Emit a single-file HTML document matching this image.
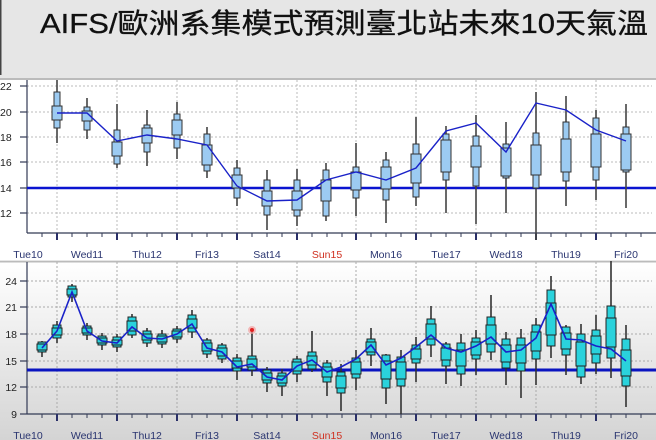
<!DOCTYPE html>
<html><head><meta charset="utf-8"><style>
html,body{margin:0;padding:0;background:#e6e6e6;}
svg{display:block;font-family:"Liberation Sans",sans-serif;}
</style></head><body>
<svg width="656" height="440" viewBox="0 0 656 440" xmlns="http://www.w3.org/2000/svg">
<defs>
<linearGradient id="g" x1="0" y1="0" x2="0" y2="1"><stop offset="0" stop-color="#ffffff"/><stop offset="1" stop-color="#d4d4d4"/></linearGradient>
</defs>
<rect x="0" y="0" width="656" height="440" fill="#e6e6e6"/>
<rect x="0" y="0" width="1.5" height="75" fill="#444"/>
<text x="40" y="33" font-family="'Liberation Sans','Noto Sans CJK TC',sans-serif" font-size="28" fill="#111" stroke="#111" stroke-width="0.3" textLength="608" lengthAdjust="spacingAndGlyphs">AIFS/歐洲系集模式預測臺北站未來10天氣溫</text>
<rect x="0" y="79" width="656" height="181" fill="#fff"/>
<rect x="0" y="78" width="656" height="2" fill="#bbb"/>
<g stroke="#bbb" stroke-dasharray="2,2" stroke-width="1">
<line x1="27" y1="86" x2="652" y2="86"/><line x1="27" y1="112" x2="652" y2="112"/><line x1="27" y1="137" x2="652" y2="137"/><line x1="27" y1="162" x2="652" y2="162"/><line x1="27" y1="213" x2="652" y2="213"/>
<line x1="57" y1="80" x2="57" y2="233"/><line x1="117" y1="80" x2="117" y2="233"/><line x1="177" y1="80" x2="177" y2="233"/><line x1="237" y1="80" x2="237" y2="233"/><line x1="297" y1="80" x2="297" y2="233"/><line x1="356" y1="80" x2="356" y2="233"/><line x1="416" y1="80" x2="416" y2="233"/><line x1="476" y1="80" x2="476" y2="233"/><line x1="536" y1="80" x2="536" y2="233"/><line x1="596" y1="80" x2="596" y2="233"/>
</g>
<g stroke="#333a55" stroke-width="1.2">
<line x1="27" y1="80" x2="27" y2="233"/><line x1="27" y1="233" x2="656" y2="233"/>
<line x1="20" y1="86" x2="27" y2="86"/><line x1="20" y1="112" x2="27" y2="112"/><line x1="20" y1="137" x2="27" y2="137"/><line x1="20" y1="162" x2="27" y2="162"/><line x1="20" y1="188" x2="27" y2="188"/><line x1="20" y1="213" x2="27" y2="213"/>
</g>
<g stroke="#333a55" stroke-width="1">
<path d="M42 233v4M72 233v4M87 233v4M102 233v4M132 233v4M147 233v4M162 233v4M192 233v4M207 233v4M222 233v4M252 233v4M267 233v4M282 233v4M312 233v4M327 233v4M342 233v4M371 233v4M386 233v4M401 233v4M431 233v4M446 233v4M461 233v4M491 233v4M506 233v4M521 233v4M551 233v4M566 233v4M581 233v4M611 233v4M626 233v4M641 233v4"/>
</g>
<g stroke="#2a3068" stroke-width="2"><path d="M57 233v7M117 233v7M177 233v7M237 233v7M297 233v7M356 233v7M416 233v7M476 233v7M536 233v7M596 233v7"/></g>
<g font-size="10.5" fill="#222">
<text x="0" y="90">22</text><text x="0" y="116">20</text><text x="0" y="141">18</text><text x="0" y="166">16</text><text x="0" y="192">14</text><text x="0" y="217">12</text>
</g>
<g font-size="10.5" fill="#2a3570" text-anchor="middle">
<text x="28" y="258">Tue10</text><text x="87" y="258">Wed11</text><text x="147" y="258">Thu12</text><text x="207" y="258">Fri13</text><text x="267" y="258">Sat14</text><text x="327" y="258" fill="#d03020">Sun15</text><text x="386" y="258">Mon16</text><text x="446" y="258">Tue17</text><text x="506" y="258">Wed18</text><text x="566" y="258">Thu19</text><text x="626" y="258">Fri20</text>
</g>
<line x1="27" y1="188" x2="656" y2="188" stroke="#0a14d0" stroke-width="2.5"/>
<g stroke="#333" fill="#9ccbf2" stroke-width="1">
<path d="M57 80V143M87 98V139M117 104V168M147 110V166M177 102V159M207 127V178M237 160V206M267 170V230M297 169V226M326 163V221M356 143V216M386 152V223M416 117V206M446 126V213M476 115V224M506 122V213M536 92V240M566 96V206M596 110V200M626 104V208" stroke="#444" stroke-width="1.6"/>
<rect x="54" y="92" width="6" height="36"/><rect x="52" y="106" width="10" height="14"/>
<rect x="84" y="107" width="6" height="23"/><rect x="82" y="111" width="10" height="10"/>
<rect x="114" y="130" width="6" height="34"/><rect x="112" y="142" width="10" height="14"/>
<rect x="144" y="125" width="6" height="27"/><rect x="142" y="128" width="10" height="15"/>
<rect x="174" y="114" width="6" height="34"/><rect x="172" y="120" width="10" height="15"/>
<rect x="204" y="134" width="6" height="37"/><rect x="202" y="145" width="10" height="20"/>
<rect x="234" y="168" width="6" height="30"/><rect x="232" y="175" width="10" height="13"/>
<rect x="264" y="180" width="6" height="35"/><rect x="262" y="191" width="10" height="15"/>
<rect x="294" y="180" width="6" height="36"/><rect x="292" y="191" width="10" height="19"/>
<rect x="323" y="170" width="6" height="46"/><rect x="321" y="180" width="10" height="21"/>
<rect x="353" y="167" width="6" height="31"/><rect x="351" y="172" width="10" height="18"/>
<rect x="383" y="160" width="6" height="40"/><rect x="381" y="167" width="10" height="22"/>
<rect x="413" y="144" width="6" height="53"/><rect x="411" y="154" width="10" height="29"/>
<rect x="443" y="134" width="6" height="46"/><rect x="441" y="140" width="10" height="32"/>
<rect x="473" y="136" width="6" height="50"/><rect x="471" y="146" width="10" height="21"/>
<rect x="503" y="144" width="6" height="34"/><rect x="501" y="148" width="10" height="28"/>
<rect x="533" y="133" width="6" height="55"/><rect x="531" y="145" width="10" height="30"/>
<rect x="563" y="122" width="6" height="59"/><rect x="561" y="139" width="10" height="33"/>
<rect x="593" y="118" width="6" height="62"/><rect x="591" y="134" width="10" height="33"/>
<rect x="623" y="127" width="6" height="45"/><rect x="621" y="134" width="10" height="36"/>
</g>
<polyline fill="none" stroke="#1a22c8" stroke-width="1.4" points="57,113 87,113 117,141 147,135 177,139 207,145 237,186 267,201 297,200 326,180 356,172 386,180 416,168 446,131 476,123 506,152 536,103 566,110 596,130 626,141"/>
<rect x="0" y="262" width="656" height="178" fill="url(#g)"/>
<rect x="0" y="261" width="656" height="1.5" fill="#bbb"/>
<g stroke="#aaa" stroke-dasharray="2,2" stroke-width="1">
<line x1="27" y1="281" x2="652" y2="281"/><line x1="27" y1="307" x2="652" y2="307"/><line x1="27" y1="334" x2="652" y2="334"/><line x1="27" y1="361" x2="652" y2="361"/><line x1="27" y1="387" x2="652" y2="387"/>
<line x1="57" y1="262" x2="57" y2="414"/><line x1="117" y1="262" x2="117" y2="414"/><line x1="177" y1="262" x2="177" y2="414"/><line x1="237" y1="262" x2="237" y2="414"/><line x1="297" y1="262" x2="297" y2="414"/><line x1="356" y1="262" x2="356" y2="414"/><line x1="416" y1="262" x2="416" y2="414"/><line x1="476" y1="262" x2="476" y2="414"/><line x1="536" y1="262" x2="536" y2="414"/><line x1="596" y1="262" x2="596" y2="414"/>
</g>
<g stroke="#333a55" stroke-width="1.2">
<line x1="27" y1="262" x2="27" y2="414"/><line x1="27" y1="414" x2="656" y2="414"/>
<line x1="20" y1="281" x2="27" y2="281"/><line x1="20" y1="307" x2="27" y2="307"/><line x1="20" y1="334" x2="27" y2="334"/><line x1="20" y1="361" x2="27" y2="361"/><line x1="20" y1="387" x2="27" y2="387"/><line x1="20" y1="414" x2="27" y2="414"/>
</g>
<g stroke="#333a55" stroke-width="1">
<path d="M42 414v4M72 414v4M87 414v4M102 414v4M132 414v4M147 414v4M162 414v4M192 414v4M207 414v4M222 414v4M252 414v4M267 414v4M282 414v4M312 414v4M327 414v4M342 414v4M371 414v4M386 414v4M401 414v4M431 414v4M446 414v4M461 414v4M491 414v4M506 414v4M521 414v4M551 414v4M566 414v4M581 414v4M611 414v4M626 414v4M641 414v4"/>
</g>
<g stroke="#2a3068" stroke-width="2"><path d="M57 414v7M117 414v7M177 414v7M237 414v7M297 414v7M356 414v7M416 414v7M476 414v7M536 414v7M596 414v7"/></g>
<g font-size="10.5" fill="#222" text-anchor="end">
<text x="17" y="285">24</text><text x="17" y="311">21</text><text x="17" y="338">18</text><text x="17" y="365">15</text><text x="17" y="391">12</text><text x="17" y="418">9</text>
</g>
<g font-size="10.5" fill="#2a3570" text-anchor="middle">
<text x="28" y="439">Tue10</text><text x="87" y="439">Wed11</text><text x="147" y="439">Thu12</text><text x="207" y="439">Fri13</text><text x="267" y="439">Sat14</text><text x="327" y="439" fill="#d03020">Sun15</text><text x="386" y="439">Mon16</text><text x="446" y="439">Tue17</text><text x="506" y="439">Wed18</text><text x="566" y="439">Thu19</text><text x="626" y="439">Fri20</text>
</g>
<line x1="27" y1="370" x2="656" y2="370" stroke="#0a14c0" stroke-width="3"/>
<path stroke="#333" stroke-width="1.6" fill="none" d="M42 341V357M57 321V343M72 284V302M87 323V340M102 333V350M117 334V352M132 314V338M147 328V347M162 330V348M177 326V343M192 310V338M207 338V358M222 343V363M237 354V380M252 332V376M267 367V392M282 369V396M297 356V382M312 331V372M327 360V396M341 364V411M356 350V390M371 328V366M386 354V404M401 350V414M416 337V382M431 306V357M446 342V384M461 334V386M476 330V375M491 295V360M506 332V385M521 329V398M536 318V385M551 276V358M566 325V375M581 324V384M596 315V374M611 261V378M626 325V407"/>
<g stroke="#222" stroke-width="1" fill="#2ad2dc">
<rect x="38" y="342" width="8" height="10"/><rect x="53" y="325" width="8" height="13"/><rect x="68" y="286" width="8" height="11"/><rect x="83" y="326" width="8" height="9"/><rect x="98" y="336" width="8" height="9"/><rect x="113" y="337" width="8" height="10"/><rect x="128" y="317" width="8" height="18"/><rect x="143" y="331" width="8" height="12"/><rect x="158" y="334" width="8" height="10"/><rect x="173" y="329" width="8" height="10"/><rect x="188" y="315" width="8" height="17"/><rect x="203" y="340" width="8" height="14"/><rect x="218" y="345" width="8" height="14"/><rect x="233" y="358" width="8" height="13"/><rect x="248" y="356" width="8" height="14"/><rect x="263" y="370" width="8" height="13"/><rect x="278" y="373" width="8" height="13"/><rect x="293" y="359" width="8" height="15"/><rect x="308" y="352" width="8" height="17"/><rect x="323" y="363" width="8" height="19"/><rect x="337" y="372" width="8" height="21"/><rect x="352" y="358" width="8" height="20"/><rect x="367" y="339" width="8" height="16"/><rect x="382" y="355" width="8" height="33"/><rect x="397" y="357" width="8" height="29"/><rect x="412" y="345" width="8" height="18"/><rect x="427" y="319" width="8" height="26"/><rect x="442" y="344" width="8" height="22"/><rect x="457" y="343" width="8" height="31"/><rect x="472" y="338" width="8" height="21"/><rect x="487" y="317" width="8" height="35"/><rect x="502" y="339" width="8" height="29"/><rect x="517" y="338" width="8" height="33"/><rect x="532" y="325" width="8" height="34"/><rect x="547" y="290" width="8" height="56"/><rect x="562" y="327" width="8" height="28"/><rect x="577" y="334" width="8" height="43"/><rect x="592" y="330" width="8" height="33"/><rect x="607" y="306" width="8" height="52"/><rect x="622" y="339" width="8" height="47"/>
</g>
<g stroke="#222" stroke-width="1" fill="#2ad2dc">
<rect x="37" y="344" width="10" height="6"/><rect x="52" y="328" width="10" height="7"/><rect x="67" y="289" width="10" height="6"/><rect x="82" y="328" width="10" height="5"/><rect x="97" y="338" width="10" height="5"/><rect x="112" y="340" width="10" height="5"/><rect x="127" y="321" width="10" height="10"/><rect x="142" y="334" width="10" height="6"/><rect x="157" y="336" width="10" height="6"/><rect x="172" y="331" width="10" height="6"/><rect x="187" y="319" width="10" height="9"/><rect x="202" y="343" width="10" height="8"/><rect x="217" y="348" width="10" height="8"/><rect x="232" y="361" width="10" height="7"/><rect x="247" y="359" width="10" height="8"/><rect x="262" y="373" width="10" height="7"/><rect x="277" y="376" width="10" height="7"/><rect x="292" y="362" width="10" height="9"/><rect x="307" y="356" width="10" height="9"/><rect x="322" y="367" width="10" height="10"/><rect x="336" y="376" width="10" height="12"/><rect x="351" y="362" width="10" height="12"/><rect x="366" y="342" width="10" height="10"/><rect x="381" y="361" width="10" height="18"/><rect x="396" y="362" width="10" height="17"/><rect x="411" y="349" width="10" height="10"/><rect x="426" y="324" width="10" height="15"/><rect x="441" y="348" width="10" height="12"/><rect x="456" y="350" width="10" height="16"/><rect x="471" y="342" width="10" height="13"/><rect x="486" y="325" width="10" height="19"/><rect x="501" y="345" width="10" height="17"/><rect x="516" y="345" width="10" height="18"/><rect x="531" y="332" width="10" height="19"/><rect x="546" y="303" width="10" height="32"/><rect x="561" y="333" width="10" height="16"/><rect x="576" y="342" width="10" height="24"/><rect x="591" y="336" width="10" height="18"/><rect x="606" y="318" width="10" height="29"/><rect x="621" y="350" width="10" height="26"/>
</g>
<polyline fill="none" stroke="#1a22c8" stroke-width="1.6" points="42,348 57,331 72,292 87,331 102,341 117,343 132,327 147,338 162,339 177,334 192,324 207,348 222,352 237,367 252,364 267,377 282,380 297,366 312,360 327,372 341,367 356,359 371,345 386,365 401,358 416,347 431,335 446,348 461,352 476,346 491,337 506,352 521,350 536,338 551,304 566,339 581,340 596,346 611,349 626,361"/>
<circle cx="252" cy="330" r="4" fill="#f4a0a0" opacity="0.7"/><circle cx="252" cy="330" r="2" fill="#e02020"/>
</svg>
</body></html>
